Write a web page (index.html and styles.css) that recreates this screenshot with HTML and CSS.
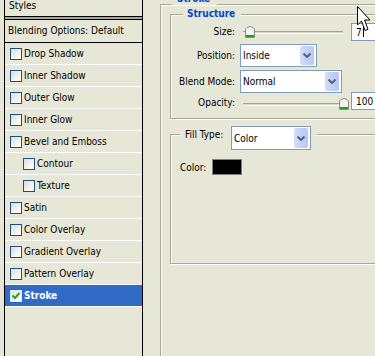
FILE: index.html
```html
<!DOCTYPE html>
<html lang="en">
<head>
  <meta charset="UTF-8">
  <title>Layer Style - Stroke</title>
  <link rel="stylesheet" href="styles.css">
</head>
<body>
  <div class="dialog">
    <div class="styles-list">
      <div class="list-head">Styles</div>
      <div class="list-split"></div>
      <div class="list-blend">Blending Options: Default</div>
      <div class="list-item"><span class="check"></span>Drop Shadow</div>
      <div class="list-item"><span class="check"></span>Inner Shadow</div>
      <div class="list-item"><span class="check"></span>Outer Glow</div>
      <div class="list-item"><span class="check"></span>Inner Glow</div>
      <div class="list-item"><span class="check"></span>Bevel and Emboss</div>
      <div class="list-item sub"><span class="check"></span>Contour</div>
      <div class="list-item sub"><span class="check"></span>Texture</div>
      <div class="list-item"><span class="check"></span>Satin</div>
      <div class="list-item"><span class="check"></span>Color Overlay</div>
      <div class="list-item"><span class="check"></span>Gradient Overlay</div>
      <div class="list-item"><span class="check"></span>Pattern Overlay</div>
      <div class="list-item selected">
        <span class="check checked">
          <svg width="10" height="10" viewBox="0 0 10 10"><path d="M1.5 4.5 L4 7 L8.5 2" fill="none" stroke="#21a121" stroke-width="2"/></svg>
        </span>Stroke
      </div>
    </div>

    <div class="settings">
      <div class="group stroke-group">
        <span class="group-title stroke-title">Stroke</span>

        <div class="group structure">
          <span class="group-title structure-title">Structure</span>

          <div class="row">
            <span class="row-label">Size:</span>
            <div class="slider">
              <div class="track"></div>
              <span class="thumb" style="left: 5px;">
                <svg width="10" height="12" viewBox="0 0 10 12"><path d="M0.5 11.5 V4 Q0.5 2.5 2 1.5 L5 0.5 L8 1.5 Q9.5 2.5 9.5 4 V11.5 Z" fill="#f3f3ee" stroke="#8c8c80"/><rect x="1" y="9" width="8" height="2" fill="#21a121"/></svg>
              </span>
            </div>
            <div class="field">7<span class="caret"></span></div>
          </div>

          <div class="row row-combo">
            <span class="row-label">Position:</span>
            <div class="combo combo-position">Inside<span class="combo-btn"><svg width="8" height="5" viewBox="0 0 8 5"><path d="M0.5 0.5 L4 4 L7.5 0.5" fill="none" stroke="#4d6185" stroke-width="2"/></svg></span></div>
          </div>

          <div class="row row-combo">
            <span class="row-label">Blend Mode:</span>
            <div class="combo combo-blend">Normal<span class="combo-btn"><svg width="8" height="5" viewBox="0 0 8 5"><path d="M0.5 0.5 L4 4 L7.5 0.5" fill="none" stroke="#4d6185" stroke-width="2"/></svg></span></div>
          </div>

          <div class="row row-opacity">
            <span class="row-label">Opacity:</span>
            <div class="slider low">
              <div class="track"></div>
              <span class="thumb" style="left: 99px;">
                <svg width="10" height="12" viewBox="0 0 10 12"><path d="M0.5 11.5 V4 Q0.5 2.5 2 1.5 L5 0.5 L8 1.5 Q9.5 2.5 9.5 4 V11.5 Z" fill="#f3f3ee" stroke="#8c8c80"/><rect x="1" y="9" width="8" height="2" fill="#21a121"/></svg>
              </span>
            </div>
            <div class="field">100</div>
          </div>
        </div>

        <div class="group fill">
          <div class="fill-title">
            <span class="fill-label">Fill Type:</span>
            <div class="combo combo-fill">Color<span class="combo-btn"><svg width="8" height="5" viewBox="0 0 8 5"><path d="M0.5 0.5 L4 4 L7.5 0.5" fill="none" stroke="#4d6185" stroke-width="2"/></svg></span></div>
          </div>
          <div class="color-row">
            <span class="color-label">Color:</span>
            <span class="swatch"></span>
          </div>
        </div>
      </div>
    </div>

    <svg class="cursor" width="14" height="27" viewBox="0 0 14 27">
      <path d="M0.5 0.5 V19 L4.5 15 L8 24.5 L11 23.3 L7.6 14 H13 Z" fill="#fff" stroke="#000"/>
    </svg>
  </div>
</body>
</html>
```

FILE: styles.css
```css
html, body {
  margin: 0;
  overflow: hidden;
}

body {
  font-family: "DejaVu Sans Condensed", "DejaVu Sans", sans-serif;
  font-stretch: condensed;
  font-size: 10px;
  color: #000;
  background: #e7e7d8;
}

.dialog {
  position: relative;
  display: flex;
  width: 375px;
  height: 356px;
  overflow: hidden;
}

/* left list */
.styles-list {
  flex-shrink: 0;
  box-sizing: border-box;
  width: 139px;
  margin-left: 4px;
  border-left: 1px solid #000;
  border-right: 1px solid #000;
}

.list-head {
  height: 16px;
  line-height: 12px;
  padding-left: 4px;
}

.list-split {
  height: 2px;
  background: #a7a697;
  border-top: 1px solid #000;
  border-bottom: 1px solid #000;
}

.list-blend {
  height: 22px;
  line-height: 22px;
  padding-left: 3px;
  border-bottom: 1px solid #000;
}

.list-item {
  display: flex;
  align-items: center;
  height: 21px;
  padding-left: 5px;
  border-bottom: 1px solid #fff;
}

.list-item.sub {
  padding-left: 18px;
}

.list-item.selected {
  background: #316ac5;
  color: #fff;
  font-weight: bold;
}

.check {
  display: flex;
  align-items: center;
  justify-content: center;
  box-sizing: border-box;
  width: 12px;
  height: 12px;
  margin-right: 2px;
  border: 1px solid #1c5180;
  background: linear-gradient(135deg, #dcdcd7 0%, #f4f4f0 60%, #fff 100%);
}

.check.checked {
  border-color: #dfe6f0;
  background: linear-gradient(135deg, #e6e6e0, #fff);
}

/* right side: group boxes run on past the window edge, so no right/bottom border */
.settings {
  flex: 1;
  min-width: 0;
  margin-left: 17px;
}

.group {
  position: relative;
  box-sizing: border-box;
  border: 1px solid #a7a697;
  box-shadow: inset 1px 1px 0 #fff, 1px 1px 0 #fff;
}

.group-title {
  position: absolute;
  top: -7px;
  line-height: 12px;
  background: #e7e7d8;
  color: #0046d5;
  font-weight: bold;
}

.stroke-group {
  height: 352px;
  margin-top: 4px;
  padding: 9px 0 0 9px;
  border-right: none;
  border-bottom: none;
  box-shadow: inset 1px 1px 0 #fff;
}

.stroke-title {
  top: -12px;
  left: 11px;
  padding: 0 7px 0 5px;
}

.structure {
  padding: 8px 0;
  border-right: none;
  box-shadow: inset 1px 1px 0 #fff, 0 1px 0 #fff;
}

.structure-title {
  left: 12px;
  padding: 0 6px 0 4px;
}

.row {
  display: flex;
  align-items: center;
  height: 18px;
}

.row-combo {
  height: 23px;
  margin-top: 3px;
}

.row-opacity {
  margin-top: -1px;
}

.row-label {
  width: 64px;
  margin-right: 5px;
  text-align: right;
  line-height: 12px;
}

.row-opacity .row-label {
  padding-top: 3px;
}

.slider {
  position: relative;
  width: 106px;
  height: 12px;
  margin-right: 5px;
}

.slider.low {
  margin-top: 6px;
}

.track {
  position: absolute;
  left: 3px;
  right: 3px;
  top: 5px;
  height: 1px;
  background: #d8d7ca;
  border-top: 1px solid #a3a294;
  border-bottom: 1px solid #fff;
}

.thumb {
  position: absolute;
  top: 0;
  width: 10px;
  height: 12px;
}

.thumb svg {
  display: block;
}

.field {
  display: flex;
  align-items: center;
  flex: 1;
  box-sizing: border-box;
  height: 18px;
  padding-left: 4px;
  border: 1px solid #7f9db9;
  border-right: none;
  background: #fff;
}

.caret {
  width: 1px;
  height: 10px;
  margin-left: 1px;
  background: #000;
}

.combo {
  position: relative;
  display: flex;
  align-items: center;
  box-sizing: border-box;
  height: 23px;
  padding-left: 2px;
  border: 1px solid #7f9db9;
  background: #fff;
}

.combo-position {
  width: 77px;
}

.combo-blend {
  width: 102px;
}

.combo-fill {
  width: 80px;
  height: 24px;
}

.combo-btn {
  position: absolute;
  top: 1px;
  right: 2px;
  bottom: 1px;
  display: flex;
  align-items: center;
  justify-content: center;
  width: 14px;
  border-radius: 2px;
  background: linear-gradient(90deg, #d3def9 0%, #c1d2f8 50%, #b6c9f5 100%);
}

.fill {
  height: 130px;
  margin-top: 15px;
  padding: 24px 0 0 9px;
  border-right: none;
  box-shadow: inset 1px 1px 0 #fff, 0 1px 0 #fff;
}

.fill-title {
  position: absolute;
  top: -9px;
  left: 9px;
  display: flex;
  align-items: flex-start;
  padding: 0 6px 0 5px;
  background: #e7e7d8;
}

.fill-label {
  width: 46px;
  margin-top: 3px;
  line-height: 12px;
}

.color-row {
  display: flex;
  align-items: center;
}

.color-label {
  width: 32px;
}

.swatch {
  box-sizing: border-box;
  width: 30px;
  height: 16px;
  border: 1px solid #808080;
  background: #000;
}

.cursor {
  position: absolute;
  left: 357px;
  top: 6px;
}
```
